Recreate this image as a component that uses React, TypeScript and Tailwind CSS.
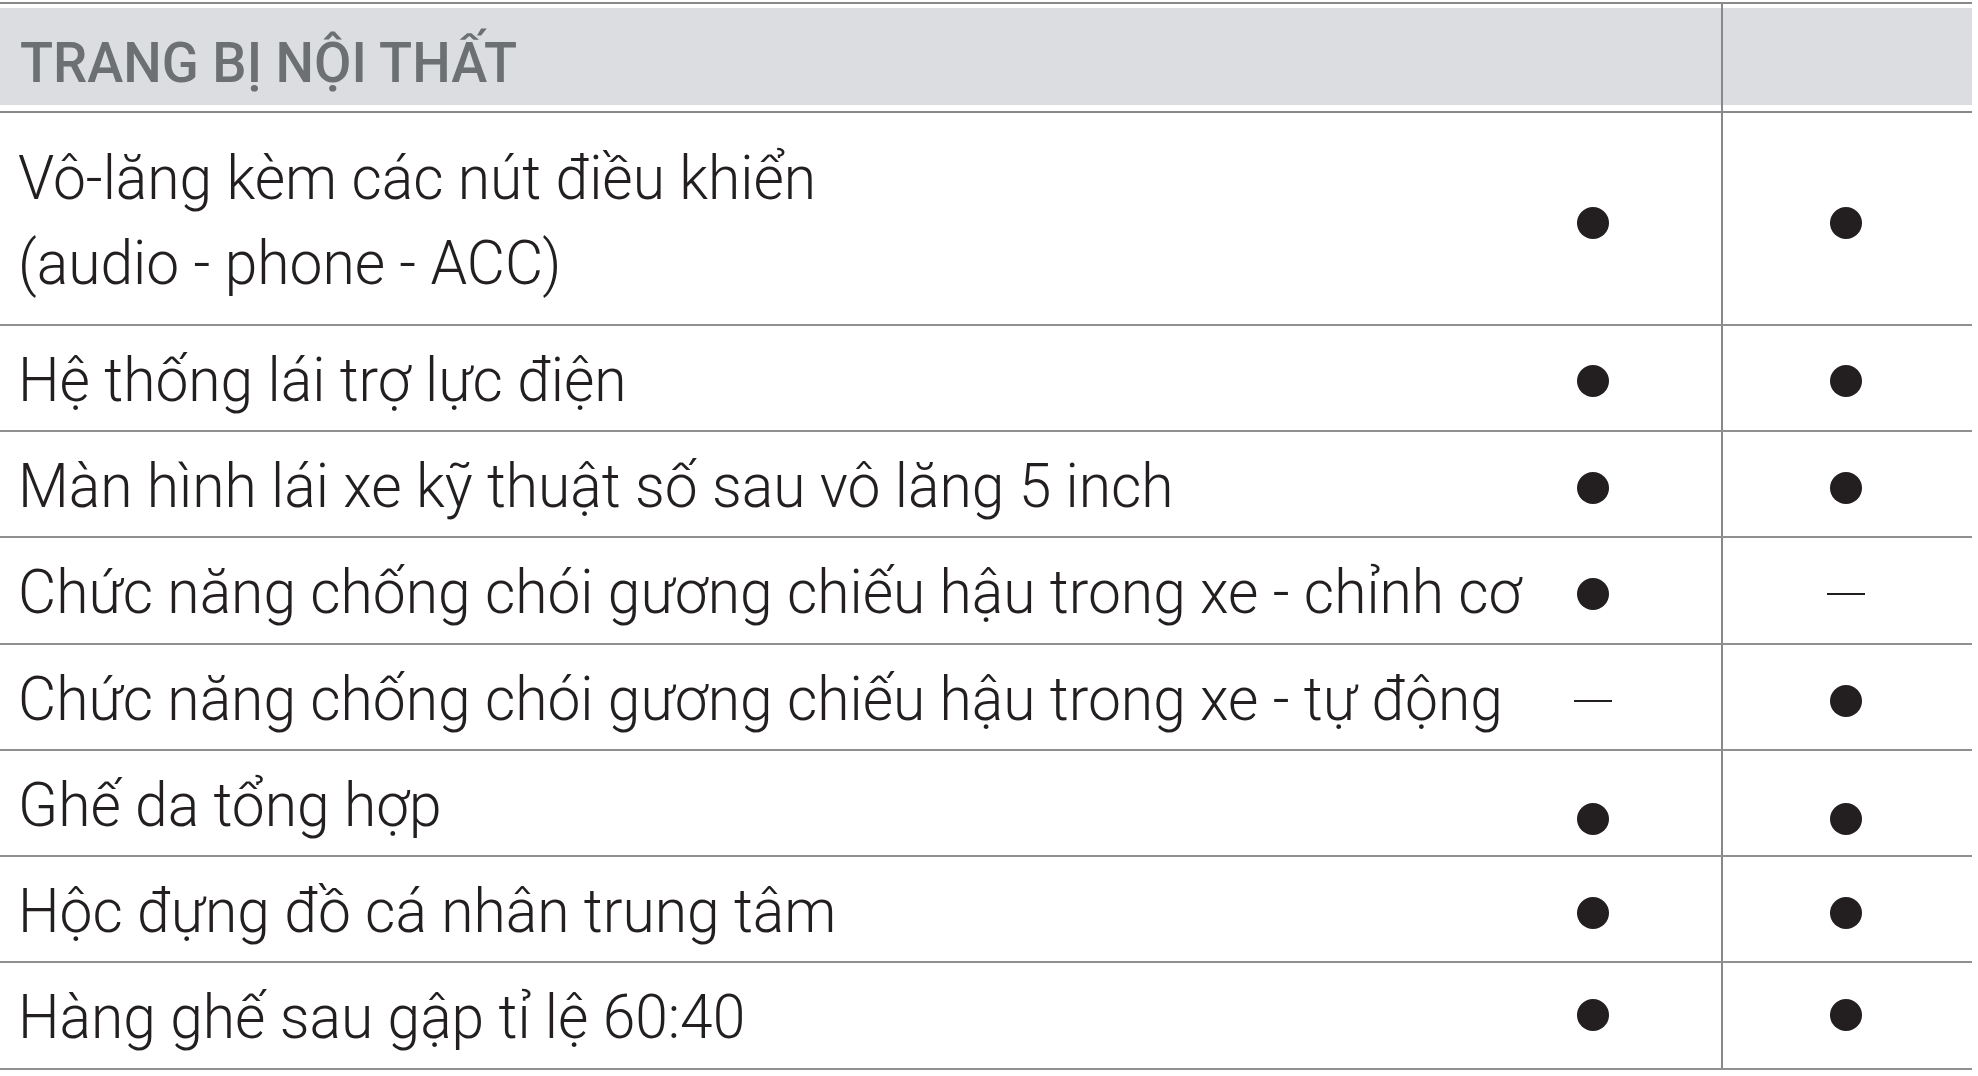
import React from 'react';

type Mark = 'dot' | 'dash';

type Row = {
  lines: string[];
  a: Mark;
  b: Mark;
  height: string;
  shift: string;
};

const rows: Row[] = [
  { lines: ['Vô-lăng kèm các nút điều khiển', '(audio - phone - ACC)'], a: 'dot', b: 'dot', height: 'h-[213px]', shift: 'mt-[9px]' },
  { lines: ['Hệ thống lái trợ lực điện'], a: 'dot', b: 'dot', height: 'h-[106px]', shift: 'mt-[6px]' },
  { lines: ['Màn hình lái xe kỹ thuật số sau vô lăng 5 inch'], a: 'dot', b: 'dot', height: 'h-[106px]', shift: 'mt-[8px]' },
  { lines: ['Chức năng chống chói gương chiếu hậu trong xe - chỉnh cơ'], a: 'dot', b: 'dash', height: 'h-[107px]', shift: 'mt-[6px]' },
  { lines: ['Chức năng chống chói gương chiếu hậu trong xe - tự động'], a: 'dash', b: 'dot', height: 'h-[106px]', shift: 'mt-[7px]' },
  { lines: ['Ghế da tổng hợp'], a: 'dot', b: 'dot', height: 'h-[106px]', shift: 'mt-[32px]' },
  { lines: ['Hộc đựng đồ cá nhân trung tâm'], a: 'dot', b: 'dot', height: 'h-[106px]', shift: 'mt-[8px]' },
  { lines: ['Hàng ghế sau gập tỉ lệ 60:40'], a: 'dot', b: 'dot', height: 'h-[107px]', shift: 'mb-[2px]' },
];

function Cell({ mark, shift }: { mark: Mark; shift: string }) {
  if (mark === 'dash') {
    return <div className={`w-[38px] h-[2px] bg-[#231f20] ${shift}`} />;
  }
  return <div className={`w-8 h-8 rounded-full bg-[#231f20] ${shift}`} />;
}

export default function App() {
  return (
    <div className="w-[1978px] min-h-[1076px] bg-white pt-[2px] font-[Roboto,sans-serif]">
      <div className="w-[1972px]">
        {/* header */}
        <div className="flex h-[111px] border-y-2 border-[#88898b]">
          <div className="w-[1721px] pt-[4px] pb-[6px]">
            <div className="h-full bg-[#dcdde0] pl-[20px] pt-[27px] text-[56px] leading-[56px]">
              <span className="inline-block origin-left scale-x-[0.97] font-medium text-[#6c7072] whitespace-nowrap">
                TRANG BỊ NỘI THẤT
              </span>
            </div>
          </div>
          <div className="w-[251px] border-l-2 border-[#88898b] pt-[4px] pb-[6px]">
            <div className="h-full bg-[#dcdde0]" />
          </div>
        </div>

        {rows.map((row, i) => (
          <div key={i} className={`flex border-b-2 border-[#8f9092] ${row.height}`}>
            <div className="w-[1465px] flex flex-col justify-center pl-[18px] pt-[2px]">
              {row.lines.map((line, j) => (
                <div key={j} className="text-[62px] leading-[85px]">
                  <span className="inline-block origin-left scale-x-[0.947] font-light text-[#231f20] whitespace-nowrap">
                    {line}
                  </span>
                </div>
              ))}
            </div>
            <div className="w-[256px] flex items-center justify-center">
              <Cell mark={row.a} shift={row.shift} />
            </div>
            <div className="w-[251px] border-l-2 border-[#88898b] flex items-center justify-center pr-[3px]">
              <Cell mark={row.b} shift={row.shift} />
            </div>
          </div>
        ))}
      </div>
    </div>
  );
}
